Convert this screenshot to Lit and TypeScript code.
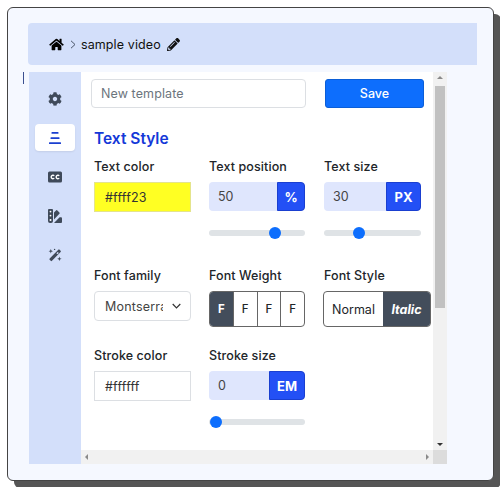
import { LitElement, html, css, svg } from "lit";
import { customElement } from "lit/decorators.js";

const HOME = svg`<svg class="ic-home" viewBox="0 0 576 512"><path fill="#000" d="M280.37 148.26L96 300.11V464a16 16 0 0 0 16 16l112.06-.29a16 16 0 0 0 15.92-16V368a16 16 0 0 1 16-16h64a16 16 0 0 1 16 16v95.64a16 16 0 0 0 16 16.05L464 480a16 16 0 0 0 16-16V300L295.67 148.26a12.19 12.19 0 0 0-15.3 0zM571.6 251.47L488 182.56V44.05a12 12 0 0 0-12-12h-56a12 12 0 0 0-12 12v72.61L318.47 43a48 48 0 0 0-61 0L4.34 251.47a12 12 0 0 0-1.6 16.9l25.5 31A12 12 0 0 0 45.15 301l235.22-193.74a12.19 12.19 0 0 1 15.3 0L530.9 301a12 12 0 0 0 16.9-1.6l25.5-31a12 12 0 0 0-1.7-16.93z"/></svg>`;
const PENCIL = svg`<svg class="ic-pencil" viewBox="0 0 512 512"><path fill="#111" d="M497.9 142.1l-46.1 46.1c-4.7 4.7-12.3 4.7-17 0l-111-111c-4.7-4.7-4.7-12.3 0-17l46.1-46.1c18.7-18.7 49.1-18.7 67.9 0l60.1 60.1c18.8 18.7 18.8 49.1 0 67.9zM284.2 99.8L21.6 362.4.4 483.9c-2.9 16.4 11.4 30.6 27.8 27.8l121.5-21.3 262.6-262.6c4.7-4.7 4.7-12.3 0-17l-111-111c-4.8-4.7-12.4-4.7-17.1 0zM124.1 339.9c-5.5-5.5-5.5-14.3 0-19.8l154-154c5.5-5.5 14.3-5.5 19.8 0s5.5 14.3 0 19.8l-154 154c-5.5 5.5-14.3 5.5-19.8 0zM88 424h48v36.3l-64.5 11.3-31.1-31.1L51.7 376H88v48z"/></svg>`;
const GEAR = svg`<svg class="ic" viewBox="0 0 512 512"><path fill="#3f4a5a" d="M487.4 315.7l-42.6-24.6c4.3-23.2 4.3-47 0-70.2l42.6-24.6c4.9-2.8 7.1-8.6 5.5-14-11.1-35.6-30-67.8-54.7-94.6-3.8-4.1-10-5.1-14.8-2.3L380.8 110c-17.9-15.4-38.5-27.3-60.8-35.1V25.8c0-5.6-3.9-10.5-9.4-11.7-36.7-8.2-74.3-7.8-109.2 0-5.5 1.2-9.4 6.1-9.4 11.7V75c-22.2 7.9-42.8 19.8-60.8 35.1L88.7 85.5c-4.9-2.8-11-1.9-14.8 2.3-24.7 26.7-43.6 58.9-54.7 94.6-1.7 5.4.6 11.2 5.5 14L67.3 221c-4.3 23.2-4.3 47 0 70.2l-42.6 24.6c-4.9 2.8-7.1 8.6-5.5 14 11.1 35.6 30 67.8 54.7 94.6 3.8 4.1 10 5.1 14.8 2.3l42.6-24.6c17.9 15.4 38.5 27.3 60.8 35.1v49.2c0 5.6 3.9 10.5 9.4 11.7 36.7 8.2 74.3 7.8 109.2 0 5.5-1.2 9.4-6.1 9.4-11.7v-49.2c22.2-7.9 42.8-19.8 60.8-35.1l42.6 24.6c4.9 2.8 11 1.9 14.8-2.3 24.7-26.7 43.6-58.9 54.7-94.6 1.5-5.5-.7-11.3-5.6-14.1zM256 336c-44.1 0-80-35.9-80-80s35.9-80 80-80 80 35.9 80 80-35.9 80-80 80z"/></svg>`;
const ALIGN = svg`<svg class="ic" viewBox="0 0 14 14"><g fill="#1a3fd0"><rect x="3.5" y="1" width="7" height="1.8" rx=".5"/><rect x="2.5" y="6.2" width="9" height="1.8" rx=".5"/><rect x="1" y="11.2" width="12" height="1.8" rx=".5"/></g></svg>`;
const CC = svg`<svg class="ic" viewBox="0 0 14 14"><rect x="0" y="1.5" width="14" height="11" rx="1.5" fill="#3f4a5a"/><g fill="none" stroke="#fff" stroke-width="1.4"><path d="M6.2 5.9a1.7 1.7 0 1 0 0 2.2"/><path d="M11.2 5.9a1.7 1.7 0 1 0 0 2.2"/></g></svg>`;
const SWATCH = svg`<svg class="ic" viewBox="0 0 14 14"><g fill="#3f4a5a"><path d="M0 1a1 1 0 0 1 1-1h3a1 1 0 0 1 1 1v11a2 2 0 0 1-2 2H2a2 2 0 0 1-2-2z"/><path d="M6 3.5 8 1.4a1 1 0 0 1 1.4 0l2 2a1 1 0 0 1 0 1.4L6 10.6z"/><path d="M13 8.2a1 1 0 0 1 1 1V13a1 1 0 0 1-1 1H6l5.6-5.8z"/></g><g fill="#fff"><circle cx="2.5" cy="2.6" r=".9"/><circle cx="2.5" cy="6.6" r=".9"/><circle cx="2.5" cy="11" r="1"/></g></svg>`;
const WAND = svg`<svg class="ic" viewBox="0 0 14 14"><g fill="#3f4a5a"><path d="M10.3 1.7a.9.9 0 0 1 1.3 0l1 1a.9.9 0 0 1 0 1.3L4 12.8a.9.9 0 0 1-1.3 0l-1-1a.9.9 0 0 1 0-1.3zM9.8 3.9 8.4 5.3l1 1 1.4-1.4z" fill-rule="evenodd"/><path d="M2.8 1 3.4 2.6 5 3.2 3.4 3.8 2.8 5.4 2.2 3.8.6 3.2 2.2 2.6z"/><path d="M11.4 8.6 12 10.2 13.6 10.8 12 11.4 11.4 13 10.8 11.4 9.2 10.8 10.8 10.2z"/><circle cx="6.6" cy="1.4" r=".7"/></g></svg>`;

@customElement("app-root")
export class AppRoot extends LitElement {
  static styles = css`
    :host {
      display: block;
      width: 500px;
      height: 487px;
      overflow: hidden;
      font-family: Inter, "Noto Sans", sans-serif;
      font-size: 13px;
      color: #212529;
      box-sizing: border-box;
      padding: 7px 0 0 7px;
      background: #fff;
    }
    * { box-sizing: border-box; }
    .card {
      position: relative;
      width: 487px;
      height: 474px;
      background: #f5f8ff;
      border: 1px solid #444;
      border-radius: 6px;
      box-shadow: 7px 7px 0 #555;
      padding: 15px 15px 0 20px;
    }
    .sliver {
      position: absolute;
      left: 15px;
      top: 64px;
      width: 1px;
      height: 12px;
      background: #3b4f8f;
    }
    .crumb {
      height: 42px;
      width: 449px;
      background: #d3dffa;
      border-radius: 4px 0 0 4px;
      display: flex;
      align-items: center;
      padding-left: 21px;
      font-size: 12.5px;
      color: #111;
      letter-spacing: 0.1px;
    }
    .ic-home { width: 15px; height: 13px; display: block; }
    .chev { width: 6px; height: 9px; margin: 0 5px 0 6px; display: block; }
    .ic-pencil { width: 13px; height: 13px; margin-left: 6px; display: block; }
    .main {
      margin-top: 7px;
      margin-left: 1px;
      width: 418px;
      height: 392px;
      display: grid;
      grid-template-columns: 52px 352px 14px;
      grid-template-rows: 378px 14px;
    }
    .side {
      grid-row: 1 / 3;
      background: #d3dffa;
      display: flex;
      flex-direction: column;
      align-items: center;
      padding-top: 13px;
    }
    .tab {
      width: 40px;
      height: 27px;
      flex: none;
      display: flex;
      align-items: center;
      justify-content: center;
      border-radius: 4px;
      margin-bottom: 12px;
    }
    .tab.on { background: #fff; box-shadow: 0 1px 2px rgba(0,0,0,.08); }
    .ic { width: 14px; height: 14px; display: block; }
    .content { background: #fff; overflow: hidden; }
    .top {
      display: flex;
      padding: 7px 0 0 10px;
      height: 36px;
    }
    .name {
      width: 215px;
      height: 29px;
      border: 1px solid #dcdfe3;
      border-radius: 4px;
      padding: 0 9px;
      display: flex;
      align-items: center;
      color: #6c757d;
      font-size: 12.5px;
      letter-spacing: 0.1px;
    }
    .save {
      margin-left: 19px;
      width: 99px;
      height: 29px;
      background: #0d6efd;
      color: #fff;
      border-radius: 3px;
      display: flex;
      align-items: center;
      justify-content: center;
      font-size: 12.5px;
      font-weight: 500;
      border: 1px solid #0b5ed7;
    }
    h2 {
      margin: 22px 0 0 13px;
      font-size: 15.5px;
      line-height: 18px;
      font-weight: 600;
      color: #1438d8;
    }
    .row {
      display: grid;
      grid-template-columns: 97px 97px 97px;
      column-gap: 18px;
      margin-left: 13px;
    }
    .mid { padding-right: 1px; }
    .r1 { margin-top: 10px; height: 109px; }
    .r2 { height: 80px; }
    .lab {
      font-size: 12.5px;
      line-height: 16px;
      font-weight: 500;
      color: #212529;
      padding-top: 1px;
      margin-bottom: 7px;
      letter-spacing: 0.1px;
      white-space: nowrap;
    }
    .text {
      height: 30px;
      border: 1px solid #dcdfe3;
      display: flex;
      align-items: center;
      padding-left: 10px;
      font-size: 12.5px;
      letter-spacing: 0.2px;
      color: #333;
    }
    .text.y { background: #ffff23; border-color: #e4e48c; }
    .sel { border-radius: 4px; justify-content: space-between; padding-right: 9px; color: #444; }
    .sel span { width: 58px; overflow: hidden; white-space: nowrap; }
    .chevd { width: 9px; height: 6px; display: block; }
    .unit {
      height: 29px;
      background: #dfe6fd;
      border-radius: 4px;
      display: flex;
      justify-content: space-between;
      align-items: center;
      padding-left: 9px;
      font-size: 12.5px;
      color: #444;
    }
    .unit b {
      height: 29px;
      background: #2350f5;
      border: 1px solid #1a3fd0;
      border-radius: 0 4px 4px 0;
      color: #fff;
      font-size: 13px;
      font-weight: 700;
      display: flex;
      align-items: center;
      justify-content: center;
    }
    .w28 { width: 28px; }
    .w35 { width: 35px; }
    .w36 { width: 36px; }
    .slider {
      position: relative;
      height: 6px;
      margin-top: 19px;
      background: #dfe3e6;
      border-radius: 3px;
    }
    .thumb {
      position: absolute;
      top: -3px;
      width: 12px;
      height: 12px;
      margin-left: -6px;
      border-radius: 50%;
      background: #0d6efd;
    }
    .seg {
      display: flex;
      height: 36px;
      border: 1px solid #666;
      border-radius: 4px;
      overflow: hidden;
      background: #fff;
      font-size: 12.5px;
    }
    .seg div {
      flex: 1;
      display: flex;
      align-items: center;
      justify-content: center;
      border-left: 1px solid #666;
      font-weight: 500;
      font-size: 11.5px;
    }
    .seg div:first-child { border-left: 0; }
    .seg .dark { background: #434d5b; color: #fff; font-weight: 700; }
    .seg.style { width: 108px; margin-left: -1px; }
    .seg.style div { border: 0; font-weight: 400; font-size: 12.5px; }
    .seg.style .n { flex: none; width: 59px; }
    .seg.style .dark { flex: 1; font-weight: 700; font-style: italic; }
    .sv, .sh { background: #f1f1f1; position: relative; }
    .sv { grid-column: 3; grid-row: 1; }
    .sh { grid-column: 2; grid-row: 2; }
    .corner { grid-column: 3; grid-row: 2; background: #dcdcdc; }
    .bar {
      position: absolute;
      left: 2px;
      top: 14px;
      width: 10px;
      height: 222px;
      background: #c1c1c1;
    }
    .arr { position: absolute; width: 0; height: 0; border: 3px solid transparent; }
    .a-up { left: 4px; top: 4px; border-bottom: 3px solid #8a8a8a; border-top: 0; }
    .a-dn { left: 4px; bottom: 4px; border-top: 3px solid #333; border-bottom: 0; }
    .a-l { left: 4px; top: 4px; border-right: 3px solid #8a8a8a; border-left: 0; }
    .a-r { right: 4px; top: 4px; border-left: 3px solid #8a8a8a; border-right: 0; }
  `;

  private slider(pos: number) {
    return html`<div class="slider"><div class="thumb" style="left:${pos}px"></div></div>`;
  }

  render() {
    return html`
      <div class="card">
        <div class="sliver"></div>
        <div class="crumb">
          ${HOME}
          <svg class="chev" viewBox="0 0 6 9"><path d="M1 .8 5 4.5 1 8.2" fill="none" stroke="#4a5568" stroke-width="1"/></svg>
          <span>sample video</span>
          ${PENCIL}
        </div>
        <div class="main">
          <div class="side">
            <div class="tab">${GEAR}</div>
            <div class="tab on">${ALIGN}</div>
            <div class="tab">${CC}</div>
            <div class="tab">${SWATCH}</div>
            <div class="tab">${WAND}</div>
          </div>
          <div class="content">
            <div class="top">
              <div class="name">New template</div>
              <div class="save">Save</div>
            </div>
            <h2>Text Style</h2>
            <div class="row r1">
              <div>
                <div class="lab">Text color</div>
                <div class="text y">#ffff23</div>
              </div>
              <div class="mid">
                <div class="lab">Text position</div>
                <div class="unit"><span>50</span><b class="w28">%</b></div>
                ${this.slider(66)}
              </div>
              <div>
                <div class="lab">Text size</div>
                <div class="unit"><span>30</span><b class="w35">PX</b></div>
                ${this.slider(35)}
              </div>
            </div>
            <div class="row r2">
              <div>
                <div class="lab">Font family</div>
                <div class="text sel"><span>Montserrat</span>
                  <svg class="chevd" viewBox="0 0 9 6"><path d="M.7 1 4.5 4.8 8.3 1" fill="none" stroke="#333" stroke-width="1.2"/></svg>
                </div>
              </div>
              <div class="mid">
                <div class="lab">Font Weight</div>
                <div class="seg"><div class="dark">F</div><div>F</div><div>F</div><div>F</div></div>
              </div>
              <div>
                <div class="lab">Font Style</div>
                <div class="seg style"><div class="n">Normal</div><div class="dark">Italic</div></div>
              </div>
            </div>
            <div class="row">
              <div>
                <div class="lab">Stroke color</div>
                <div class="text">#ffffff</div>
              </div>
              <div class="mid">
                <div class="lab">Stroke size</div>
                <div class="unit"><span>0</span><b class="w36">EM</b></div>
                ${this.slider(7)}
              </div>
            </div>
          </div>
          <div class="sv">
            <div class="arr a-up"></div>
            <div class="bar"></div>
            <div class="arr a-dn"></div>
          </div>
          <div class="sh">
            <div class="arr a-l"></div>
            <div class="arr a-r"></div>
          </div>
          <div class="corner"></div>
        </div>
      </div>
    `;
  }
}
